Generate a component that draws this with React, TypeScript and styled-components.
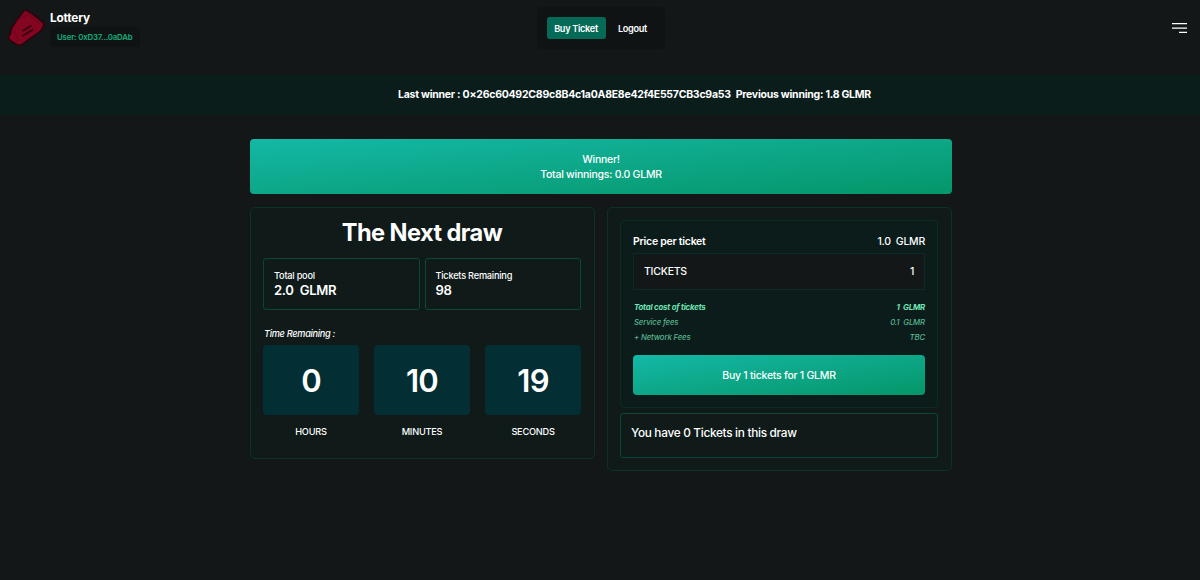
import React from 'react';
import styled, { createGlobalStyle } from 'styled-components';

const GlobalStyle = createGlobalStyle`
  * {
    box-sizing: border-box;
  }

  body {
    margin: 0;
    background-color: #131718;
    color: #fff;
    font-family: Inter, sans-serif;
    font-size: 10.5px;
    line-height: 15px;
  }

  body * {
    letter-spacing: -0.024em;
  }

  button {
    font: inherit;
    color: inherit;
    border: none;
  }
`;

const Page = styled.div`
  min-height: 580px;
  overflow: hidden;
`;

const Header = styled.header`
  display: grid;
  grid-template-columns: 1fr 128px 1fr;
  align-items: start;
  height: 75px;
  padding: 7px 7px 0 8px;
`;

const Brand = styled.div`
  display: flex;
  gap: 5px;
`;

const Logo = styled.svg`
  width: 37px;
  height: 40px;
`;

const BrandName = styled.h1`
  margin: 4px 0 1px;
  font-size: 11.8px;
  line-height: 15px;
  font-weight: 700;
  letter-spacing: -0.015em;
`;

const User = styled.p`
  width: 90px;
  height: 20px;
  margin: 0;
  padding-left: 7px;
  border-radius: 3px;
  background-color: #101314;
  color: #10b07c;
  font-size: 7.85px;
  line-height: 20px;
  font-weight: 600;
  white-space: nowrap;
`;

const Nav = styled.nav`
  display: flex;
  align-items: center;
  height: 42px;
  padding-left: 10px;
  border-radius: 4px;
  background-color: #101313;
`;

const NavButton = styled.button<{ $active?: boolean }>`
  width: ${({ $active }) => ($active ? '59px' : '54px')};
  height: 22px;
  padding: 0;
  border-radius: 3px;
  background-color: ${({ $active }) => ($active ? '#056b57' : 'transparent')};
  font-size: 9.2px;
  font-weight: 600;
  letter-spacing: -0.035em;
  white-space: nowrap;
`;

const Menu = styled.svg`
  justify-self: end;
  width: 24px;
  height: 24px;
  margin-top: 9px;
`;

const Marquee = styled.div`
  display: flex;
  gap: 5px;
  height: 40px;
  padding-left: 398px;
  background-color: #0a1d1b;
  font-size: 10.5px;
  line-height: 40px;
  font-weight: 700;
  white-space: nowrap;
`;

const Content = styled.main`
  width: 702px;
  margin: 24px 0 0 250px;
`;

const Banner = styled.section`
  height: 55px;
  margin-bottom: 13px;
  padding-top: 13px;
  border-radius: 4px;
  background: linear-gradient(to bottom right, #14b8a6, #059669);
  font-weight: 500;
  letter-spacing: -0.03em;
  text-align: center;
`;

const Columns = styled.div`
  display: grid;
  grid-template-columns: 345px 345px;
  gap: 12px;
  align-items: start;
`;

const Card = styled.section<{ $height: number }>`
  height: ${({ $height }) => $height}px;
  padding: 12px 13px 0 12px;
  border: 1px solid #0a3228;
  border-radius: 5px;
  background-color: #0f1a19;
`;

const Title = styled.h2`
  height: 38px;
  margin: 0;
  font-size: 23.6px;
  line-height: 26px;
  font-weight: 700;
  text-align: center;
`;

const Stats = styled.div`
  display: grid;
  grid-template-columns: 1fr 1fr;
  gap: 5px;
`;

const Stat = styled.div`
  height: 52px;
  padding: 9px 10px 0;
  border: 1px solid #07483d;
  border-radius: 3px;
`;

const StatLabel = styled.div`
  font-size: 9.2px;
  line-height: 15px;
  font-weight: 500;
`;

const StatValue = styled.div`
  font-size: 13.1px;
  line-height: 15px;
  font-weight: 600;
  white-space: pre;
`;

const TimeLabel = styled.div`
  margin: 16px 0 4px 1px;
  font-size: 9.2px;
  line-height: 15px;
  font-style: italic;
  font-weight: 500;
  letter-spacing: -0.033em;
`;

const Timer = styled.div`
  display: grid;
  grid-template-columns: repeat(3, 96px);
  justify-content: space-between;
`;

const TimeUnit = styled.div`
  text-align: center;
  font-size: 9.2px;
  font-weight: 500;
`;

const TimeValue = styled.div`
  height: 70px;
  margin-bottom: 9px;
  border-radius: 4px;
  background-color: #032e33;
  font-size: 31px;
  line-height: 71px;
  font-weight: 600;
`;

const Purchase = styled.div`
  height: 188px;
  padding: 13px 12px 0;
  border: 1px solid #0a2c24;
  border-radius: 4px;
  background-color: #0c1c1a;
`;

const Row = styled.div`
  display: flex;
  justify-content: space-between;
  white-space: pre;
`;

const PriceRow = styled(Row)`
  margin-bottom: 4px;
  font-weight: 500;

  span:first-child {
    font-weight: 600;
  }
`;

const TicketInput = styled(Row)`
  height: 37px;
  margin-bottom: 10px;
  padding: 0 10px;
  border: 1px solid #0a2c24;
  background-color: #131718;
  line-height: 35px;
  font-weight: 500;
`;

const FeeRow = styled(Row)<{ $bold?: boolean }>`
  padding-left: 1px;
  color: ${({ $bold }) => ($bold ? '#6ee7b7' : '#57b590')};
  font-size: 7.85px;
  font-style: italic;
  font-weight: ${({ $bold }) => ($bold ? 700 : 500)};
`;

const BuyButton = styled.button`
  display: block;
  width: 100%;
  height: 40px;
  margin-top: 10px;
  border-radius: 4px;
  background: linear-gradient(to bottom right, #14b8a6, #059669);
  font-weight: 500;
`;

const Owned = styled.div`
  height: 45px;
  margin-top: 5px;
  padding: 10px 10px 0;
  border: 1px solid #07483d;
  border-radius: 3px;
  font-size: 11.8px;
  line-height: 18px;
  font-weight: 500;
  letter-spacing: -0.025em;
`;

const fees = [
  { label: 'Total cost of tickets', value: '1  GLMR', bold: true },
  { label: 'Service fees', value: '0.1  GLMR' },
  { label: '+ Network Fees', value: 'TBC' },
];

const time = [
  { label: 'HOURS', value: 0 },
  { label: 'MINUTES', value: 10 },
  { label: 'SECONDS', value: 19 },
];

const App: React.FC = () => {
  return (
    <Page>
      <GlobalStyle />
      <Header>
        <Brand>
          <Logo viewBox="0 0 37 40">
            <path
              d="M15.6 4Q17 2.4 18.8 3.5L23.4 6.2L34.8 15.2Q36.5 16.8 35.8 18.6L33 23.8L14 37.4Q11.6 39 9 37.8L2.6 33.8Q.2 31.6 .8 29.2Q3.6 26 3 22L9.2 12.4Z"
              fill="#830521"
              stroke="#2c050b"
              strokeWidth="1.6"
              strokeLinejoin="round"
            />
            <path
              d="M9.6 12.6 20 7.5 32.4 17M5 21.5 10 32.5 7.6 35.6"
              stroke="#67041a"
              strokeWidth=".8"
              fill="none"
            />
            <path d="M14.5 24 23.5 18.4M14.6 29 25.4 22.2" stroke="#36050f" strokeWidth="1.8" />
          </Logo>
          <div>
            <BrandName>Lottery</BrandName>
            <User>User: 0xD37...0aDAb</User>
          </div>
        </Brand>
        <Nav>
          <NavButton $active>Buy Ticket</NavButton>
          <NavButton>Logout</NavButton>
        </Nav>
        <Menu viewBox="0 0 24 24" fill="none" stroke="#fff" strokeWidth="1.3">
          <path d="M3 7.6H18M3 12.2H18M10 16.4H18" />
        </Menu>
      </Header>
      <Marquee>
        <span>Last winner : 0×26c60492C89c8B4c1a0A8E8e42f4E557CB3c9a53</span>
        <span>Previous winning: 1.8 GLMR</span>
      </Marquee>
      <Content>
        <Banner>
          <div>Winner!</div>
          <div>Total winnings: 0.0 GLMR</div>
        </Banner>
        <Columns>
          <Card $height={252}>
            <Title>The Next draw</Title>
            <Stats>
              <Stat>
                <StatLabel>Total pool</StatLabel>
                <StatValue>2.0  GLMR</StatValue>
              </Stat>
              <Stat>
                <StatLabel>Tickets Remaining</StatLabel>
                <StatValue>98</StatValue>
              </Stat>
            </Stats>
            <TimeLabel>Time Remaining :</TimeLabel>
            <Timer>
              {time.map(({ label, value }) => (
                <TimeUnit key={label}>
                  <TimeValue>{value}</TimeValue>
                  {label}
                </TimeUnit>
              ))}
            </Timer>
          </Card>
          <Card $height={264}>
            <Purchase>
              <PriceRow>
                <span>Price per ticket</span>
                <span>1.0  GLMR</span>
              </PriceRow>
              <TicketInput>
                <span>TICKETS</span>
                <span>1</span>
              </TicketInput>
              {fees.map(({ label, value, bold }) => (
                <FeeRow key={label} $bold={bold}>
                  <span>{label}</span>
                  <span>{value}</span>
                </FeeRow>
              ))}
              <BuyButton>Buy 1 tickets for 1 GLMR</BuyButton>
            </Purchase>
            <Owned>You have 0 Tickets in this draw</Owned>
          </Card>
        </Columns>
      </Content>
    </Page>
  );
};

export default App;
